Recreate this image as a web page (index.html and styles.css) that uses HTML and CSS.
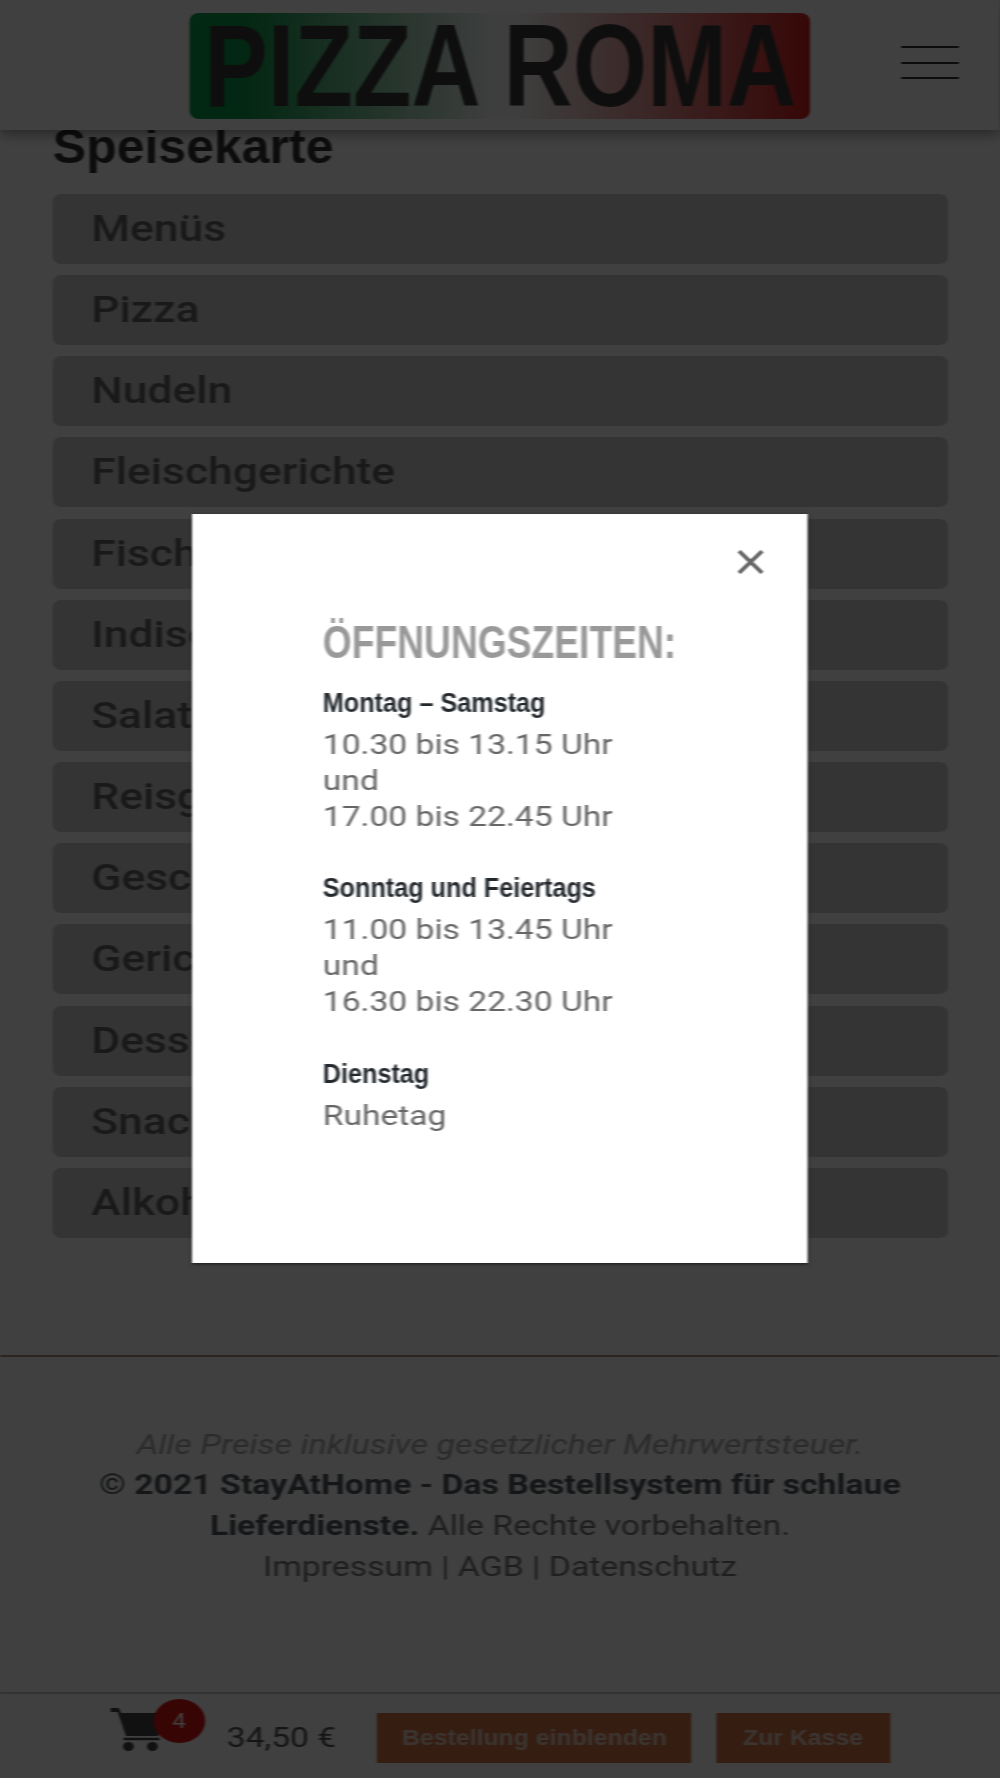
FILE: index.html
```html
<!DOCTYPE html>
<html lang="de">
<head>
<meta charset="utf-8">
<title>Pizza Roma</title>
<link rel="stylesheet" href="styles.css">
</head>
<body>
<div class="stage">
  <header class="top">
    <div class="logo"><span class="logo-text">PIZZA ROMA</span></div>
    <div class="burger"><i></i><i></i><i></i></div>
  </header>
  <main class="menu">
    <h1 class="menu-title"><span class="narrow">Speisekarte</span></h1>
    <ul class="cats">
      <li>Menüs</li><li>Pizza</li><li>Nudeln</li><li>Fleischgerichte</li><li>Fischgerichte</li><li>Indische Gerichte</li><li>Salate</li><li>Reisgerichte</li><li>Geschnetzeltes</li><li>Gerichte</li><li>Desserts</li><li>Snacks</li><li>Alkoholfreie Getränke</li>
    </ul>
  </main>
  <footer class="foot">
    <p class="tax">Alle Preise inklusive gesetzlicher Mehrwertsteuer.</p>
    <p><strong>© 2021 StayAtHome - Das Bestellsystem für schlaue Lieferdienste.</strong> Alle Rechte vorbehalten.</p>
    <p>Impressum | AGB | Datenschutz</p>
  </footer>
  <div class="cartbar">
    <div class="cart">
      <svg class="cart-icon" viewBox="0 0 46 43" preserveAspectRatio="none"><path d="M0 0h7l2 5h35l-4 23H13L6 4H0z" fill="#444"/><path d="M11 31h30" stroke="#444" stroke-width="2.5"/><circle cx="15" cy="38.500" r="4.500" fill="#444"/><circle cx="35" cy="38.500" r="4.500" fill="#444"/></svg>
      <span class="badge">4</span>
    </div>
    <span class="price">34,50 €</span>
    <a class="btn btn-a"><span class="btn-text">Bestellung einblenden</span></a>
    <a class="btn btn-b"><span class="btn-text">Zur Kasse</span></a>
  </div>
  <div class="overlay"></div>
  <section class="modal">
    <svg class="close" viewBox="0 0 24 24" preserveAspectRatio="none"><path d="M2 2l20 20M22 2L2 22" stroke="#666" stroke-width="3.4" fill="none"/></svg>
    <div class="modal-body">
      <h2 class="hours-title"><span class="narrow">ÖFFNUNGSZEITEN:</span></h2>
      <h3 class="day"><span class="narrow">Montag – Samstag</span></h3>
      <p class="time">10.30 bis 13.15 Uhr<br>und<br>17.00 bis 22.45 Uhr</p>
      <h3 class="day"><span class="narrow">Sonntag und Feiertags</span></h3>
      <p class="time">11.00 bis 13.45 Uhr<br>und<br>16.30 bis 22.30 Uhr</p>
      <h3 class="day"><span class="narrow">Dienstag</span></h3>
      <p class="time">Ruhetag</p>
    </div>
  </section>
</div>
</body>
</html>
```
FILE: styles.css
```css
html, body { margin: 0; padding: 0; background: #404040; }
body { width: 1000px; height: 1778px; overflow: hidden; }
.stage {
  position: relative;
  width: 833.33px;
  height: 1778px;
  padding-right: 12px;
  transform: scaleX(1.2);
  transform-origin: 0 0;
  filter: blur(0.7px);
  background: #fff;
  font-family: Roboto, "Liberation Sans", sans-serif;
  color: #444;
  overflow: hidden;
}
.narrow {
  display: inline-block;
  font-family: "Liberation Sans", sans-serif;
  font-weight: 700;
  transform-origin: 0 50%;
  white-space: nowrap;
}
.top {
  position: relative;
  z-index: 1;
  height: 130px;
  background: #fff;
  box-shadow: 0 3px 12px rgba(0,0,0,.45);
  display: flex;
  align-items: center;
  justify-content: center;
}
.logo {
  width: 517px;
  height: 106px;
  margin-top: 2px;
  border-radius: 8px;
  background: linear-gradient(90deg, #0b9a48 0%, #0b9a48 8%, #f7f7f7 49%, #f7f7f7 53%, #d8201f 100%);
  display: flex;
  align-items: center;
  justify-content: center;
  overflow: hidden;
}
.logo-text {
  flex: none;
  font-family: "Liberation Sans", sans-serif;
  font-weight: 700;
  font-size: 116px;
  line-height: 106px;
  color: #3a3a3a;
  white-space: nowrap;
  display: inline-block;
  transform: scaleX(0.688);
}
.burger {
  position: absolute;
  left: 751px;
  top: 46px;
  width: 47.5px;
  display: flex;
  flex-direction: column;
  gap: 13.5px;
}
.burger i { display: block; height: 2px; background: #333; }
.menu { padding: 0 43.33px 0 43.5px; }
.menu-title {
  margin: -9px 0 23px;
  height: 50px;
  line-height: 50px;
  font-size: 49px;
  color: #333;
}
.menu-title .narrow { transform: scaleX(0.85); }
.cats {
  list-style: none;
  margin: 0;
  padding: 0;
  display: flex;
  flex-direction: column;
  gap: 11.16px;
}
.cats li {
  height: 70px;
  line-height: 70px;
  padding-left: 32.5px;
  background: #d0d0d0;
  border-radius: 7px;
  font-size: 37px;
  font-weight: 500;
  color: #666;
}
.foot {
  margin-top: 117px;
  border-top: 2px solid #a89480;
  padding-top: 68px;
  text-align: center;
  font-size: 28.15px;
  line-height: 40.6px;
  color: #777;
}
.foot p { margin: 0 auto; width: 680px; }
.foot .tax { font-size: 28.4px; font-style: italic; color: #aaa; }
.foot strong { color: #50585f; font-weight: 700; }
.cartbar {
  position: absolute;
  left: 0;
  right: 0;
  top: 1692px;
  height: 86px;
  border-top: 2px solid #ccc;
  box-sizing: border-box;
  background: #fff;
}
.cart { position: absolute; left: 92px; top: 14px; width: 46px; height: 43px; }
.cart-icon { display: block; width: 46px; height: 43px; }
.badge {
  position: absolute;
  left: 36px;
  top: -9px;
  width: 42.5px;
  height: 44px;
  border-radius: 50%;
  background: #e01616;
  color: #fff;
  font-size: 20px;
  line-height: 44px;
  text-align: center;
}
.price {
  position: absolute;
  left: 189px;
  top: 24px;
  font-size: 28px;
  line-height: 40px;
  color: #555;
}
.btn {
  position: absolute;
  top: 19px;
  height: 50px;
  background: #d4764a;
  display: flex;
  align-items: center;
  justify-content: center;
  color: #ecd3c4;
}
.btn-a { left: 314px; width: 262px; }
.btn-b { left: 597px; width: 145px; }
.btn-text {
  flex: none;
  font-family: "Liberation Sans", sans-serif;
  font-weight: 700;
  font-size: 22px;
  white-space: nowrap;
  transform: scaleX(0.94);
}
.overlay {
  position: absolute;
  inset: 0;
  z-index: 2;
  background: rgba(0,0,0,.75);
}
.modal {
  position: absolute;
  z-index: 3;
  left: 160px;
  top: 514px;
  width: 513.33px;
  height: 749px;
  background: #fff;
  box-shadow: 0 1px 3px rgba(0,0,0,.6);
}
.close {
  position: absolute;
  left: 453.5px;
  top: 35px;
  width: 23px;
  height: 26px;
}
.modal-body { padding: 103px 0 0 109px; }
.hours-title {
  margin: 0 0 16px;
  height: 50px;
  line-height: 50px;
  font-size: 46px;
  color: #999;
}
.hours-title .narrow { transform: scaleX(0.674); }
.day {
  margin: 0;
  font-size: 28px;
  line-height: 40px;
  height: 40px;
  color: #23282d;
}
.day .narrow { transform: scaleX(0.75); }
.time {
  margin: 4px 0 33.3px;
  font-size: 28px;
  line-height: 36px;
  color: #666;
}
```
